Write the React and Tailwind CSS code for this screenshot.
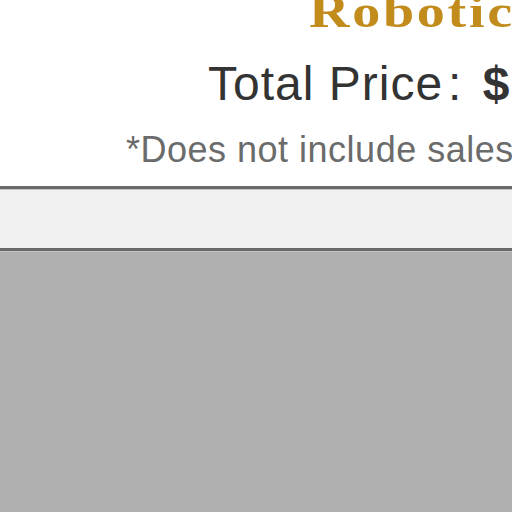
export default function App() {
  return (
    <div className="w-[512px] h-[512px] overflow-hidden bg-white flex flex-col">
      {/* Summary header, text runs off the right edge */}
      <header className="pb-[18px] whitespace-nowrap">
        <h1 className="-mt-[11px] pl-[309px] text-[46px] leading-none font-bold tracking-[2.2px] text-[#c28c1d] font-['Liberation_Serif',serif]">
          <span className="inline-block origin-left scale-x-[1.22]">Robotics Kit</span>
        </h1>
        <p className="mt-[25px] pl-[208px] text-[48px] leading-none tracking-[1px] text-[#333333] font-['Liberation_Sans',Arial,sans-serif]">
          Total Price<span className="ml-[5px]">:</span>{' '}
          <span className="ml-[6px] font-bold">$1,249.00</span>
        </p>
        <p className="mt-[24px] pl-[126px] text-[36px] leading-none tracking-[0.5px] text-[#6b6b6b] font-['Liberation_Sans',Arial,sans-serif]">
          *Does not include sales tax
        </p>
      </header>

      <div className="border-t-[3px] border-[#6a6a6a]">
        <div className="h-[59px] border-t border-[#c4c4c4] bg-[#f1f1f1]" />
      </div>

      <main className="flex-1 flex flex-col border-t-[3px] border-[#6a6a6a]">
        <div className="flex-1 border-t border-[#c2c2c2] bg-[#b0b0b0]" />
      </main>
    </div>
  );
}
